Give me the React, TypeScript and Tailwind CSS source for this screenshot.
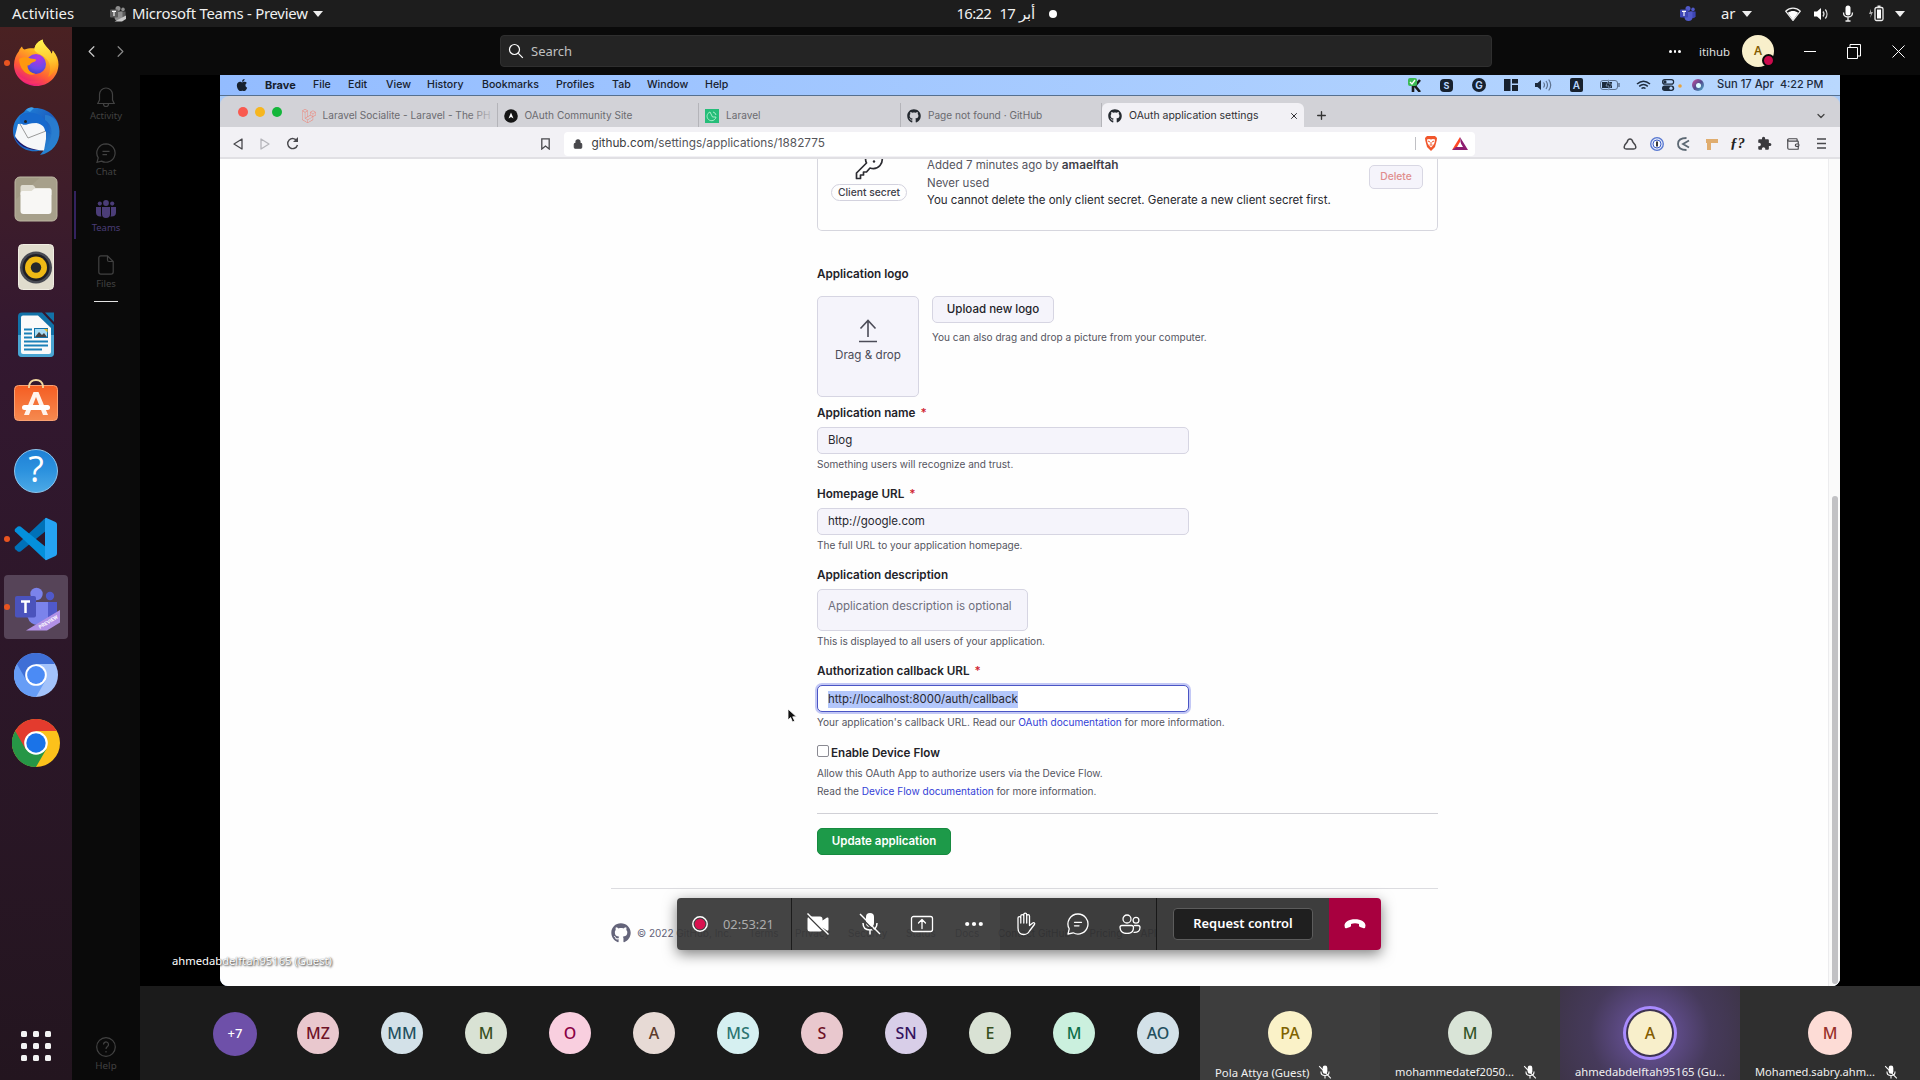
import type { ReactNode } from "react";
import { ChevronDown, ChevronLeft, ChevronRight, Lock, Plus, Wallet, X } from "lucide-react";
import { FaApple, FaGithub, FaLaravel } from "react-icons/fa";
import { MdExtension } from "react-icons/md";

const noto = "font-['Noto_Sans','Open_Sans',sans-serif]";
const inter = "font-['Inter','Liberation_Sans',sans-serif]";

/* ---------- Ubuntu top bar ---------- */

function Caret() {
  return <svg width="10" height="6" viewBox="0 0 10 6" fill="#eee"><path d="M0 0h10L5 6z" /></svg>;
}

function TeamsTray({ gray = false }: { gray?: boolean }) {
  const dark = gray ? "#5c5c5c" : "#3d45b5";
  const mid = gray ? "#8e8e8e" : "#5059c9";
  return (
    <svg width="16" height="16" viewBox="0 0 16 16">
      <circle cx="8" cy="2.6" r="2.5" fill={mid} />
      <circle cx="13" cy="3.4" r="1.8" fill={mid} />
      <path d="M10 5.5h5.6v4.8a3 3 0 0 1-5.600 0z" fill={dark} />
      <path d="M4.500 5.500h8v5.500a4 4 0 0 1-8 0z" fill={mid} />
      <rect x="0" y="3.500" width="8" height="8" rx="1" fill={dark} />
      <path d="M2 5.400h4M4 5.400v4.600" stroke="#fff" strokeWidth="1.100" />
      {gray && <path d="M4.500 15.500 16 9.500v3.500l-4 2.500z" fill="#c8c8c8" />}
    </svg>
  );
}

function TopBar() {
  return (
    <header className={`flex h-[27px] shrink-0 items-center bg-[#1d1d1d] text-[14.9px] leading-none text-[#f0f0f0] ${noto}`}>
      <span className="ml-3 w-[98px] shrink-0">Activities</span>
      <TeamsTray gray />
      <span className="ml-[6px] w-[181px] shrink-0 tracking-[-0.24px]">Microsoft Teams - Preview</span>
      <Caret />
      <div className="ml-[633.500px] flex w-[107px] shrink-0 items-center">
        <span className="w-[43px] tracking-[-0.7px]">16:22</span>
        <span className="w-[19px] tracking-[-0.7px]">17</span>
        <span className="w-[30px] text-[15px]" dir="rtl" lang="ar"><span className="float-left">أبر</span></span>
        <span className="h-2 w-2 rounded-full bg-white" />
      </div>
      <div className="mr-[15px] ml-auto flex items-center">
        <TeamsTray />
        <span className="ml-[25px] w-[21px]">ar</span>
        <Caret />
        <svg className="ml-[33px]" width="16" height="14" viewBox="0 0 16 14">
          <path d="M.7 4.200C5 0 11 0 15.300 4.200L8 13.500z" fill="none" stroke="#eee" strokeWidth="1.200" />
          <path d="M2.800 5.800C6 3.500 10 3.500 13.200 5.800L8 13z" fill="#fff" />
        </svg>
        <svg className="ml-3" width="16" height="14" viewBox="0 0 16 14">
          <path d="M1 4.500h3L8 1v12L4 9.500H1z" fill="#fff" />
          <path d="M10 4.500a4 4 0 0 1 0 5M12.300 2.500a7 7 0 0 1 0 9" fill="none" stroke="#ddd" strokeWidth="1.300" />
        </svg>
        <svg className="ml-[13px]" width="12" height="17" viewBox="0 0 12 17">
          <rect x="3.500" y="0.500" width="5" height="10" rx="2.500" fill="#fff" />
          <path d="M1.500 7.500c0 6 9 6 9 0M6 12v4M3.500 16h5" fill="none" stroke="#eee" strokeWidth="1.300" />
        </svg>
        <svg className="ml-[14px]" width="17" height="17" viewBox="0 0 17 17">
          <path d="M3 4 1 9h2l-1 4 3-6H3z" fill="#aaa" />
          <rect x="7" y="2.500" width="8" height="13" rx="1.500" fill="none" stroke="#eee" strokeWidth="1.300" />
          <rect x="9.500" y="0.500" width="3" height="2" fill="#eee" />
          <rect x="9" y="4.500" width="4" height="9" fill="#fff" />
        </svg>
        <span className="ml-[10px]"><Caret /></span>
      </div>
    </header>
  );
}

/* ---------- Dock ---------- */

function Firefox() {
  return (
    <svg width="48" height="48" viewBox="0 0 48 48">
      <defs>
        <linearGradient id="ffBody" x1="0.800" y1="0" x2="0.300" y2="1">
          <stop offset="0" stopColor="#fff14a" /><stop offset="0.350" stopColor="#ffb31f" />
          <stop offset="0.700" stopColor="#ff5b36" /><stop offset="1" stopColor="#e5128a" />
        </linearGradient>
        <linearGradient id="ffTail" x1="0.400" y1="0" x2="0.500" y2="1">
          <stop offset="0" stopColor="#fff44f" /><stop offset="0.600" stopColor="#ffc52e" /><stop offset="1" stopColor="#ff8a16" />
        </linearGradient>
        <radialGradient id="ffGlobe" cx="0.600" cy="0.200" r="0.900">
          <stop offset="0" stopColor="#b833e1" /><stop offset="0.600" stopColor="#6a4be8" /><stop offset="1" stopColor="#3a3fc4" />
        </radialGradient>
      </defs>
      <path d="M7 12c.5-2 2-3.500 3-4.500.5 1.500 1 2.500 2.500 3 3-1 7-1.500 10-1C23 5 27 2 30.500.5c.5 4 3 6 5 8.500 2 2 3.500 4 4 6 .8-1 1.200-2.200 1.300-3.500C45 16 46.500 21 46.500 25.500 46 38 36.500 47 24.500 47S2 37.500 2 26c0-5.500 2-10.500 5-14z" fill="url(#ffBody)" />
      <path d="M30.500.5c.5 4 3 6 5 8.500 2 2 3.500 4 4 6 .8-1 1.200-2.200 1.300-3.500C48 22 44 34 36 38c3-7 3-13-1-17.500C31 15 21 14 22.500 9.500 23 5 27 2 30.500.5z" fill="url(#ffTail)" />
      <circle cx="24" cy="25" r="10" fill="url(#ffGlobe)" />
      <path d="M7 20c3-2 7-2.500 10-1 2 1 5 .8 7 1.500.5 2-3 2.500-4.500 3.500-1.500 1-1.500 2.500-4 2.500 0 4 3 7.500 8 8.500-8 3-16-4-16.500-15z" fill="#ff980e" />
      <path d="M3 31c5 10 17 14 30 9-7 8-26 7-30-9z" fill="#ff3a5f" opacity=".55" />
    </svg>
  );
}

function Thunderbird() {
  return (
    <svg width="48" height="48" viewBox="0 0 48 48">
      <defs>
        <linearGradient id="tb" x1="0" y1="0" x2="1" y2="1"><stop offset="0" stopColor="#1f8be0" /><stop offset=".5" stopColor="#1d5fc0" /><stop offset="1" stopColor="#2b95dc" /></linearGradient>
      </defs>
      <path d="M12 5C14 1 18 0 21 1c14-1 26 9 26.500 23C48 36 40 46 28 48l4-5-6 1C12 46 1 36 1 24 1 16 5 9 12 5z" fill="url(#tb)" />
      <path d="M3 31c4 8 12 11 20 12l8-1z" fill="#1c1668" />
      <path d="m6 17 28-1.500V32l-2 11.500C21 43 9 40 3 29z" fill="#f6f7f9" />
      <path d="m8 17 8 14 18-7" fill="none" stroke="#9a9a9a" strokeWidth="1" />
      <path d="M9 8c7-5 19-2 24 5 4 5 3 10 6 14l-6-3c0-5-6-9-13-8-5 1-7 3-10 1C7 14 7 10 9 8z" fill="#1769cd" />
      <path d="M33 13c7 5 8 12 5 20-1 5-4 8-6 10 10-3 15-10 15-19S41 8 33 8z" fill="#2a7fd0" opacity=".85" />
      <path d="M14 3q4-4 8-2l-4 4z" fill="#3fa0ea" />
      <circle cx="13.500" cy="14.500" r="1.500" fill="#222" />
    </svg>
  );
}

function FilesIcon() {
  return (
    <svg width="44" height="46" viewBox="0 0 44 46">
      <rect x="1" y="1" width="42" height="44" rx="5" fill="#a19a84" stroke="#beb8a4" />
      <path d="M1.500 44V24L26 1.500h13q4 0 4 4V41q0 4-4 4H5z" fill="#b6b09c" opacity=".3" />
      <path d="M6.500 11q0-2 2-2h10q1.500 0 3 3h14q2 0 2 2v5h-31z" fill="#dfdcd0" />
      <path d="M6.500 17q0-2 2-2h9l3-2.500h15q2 0 2 2V35q0 3-3 3h-25q-3 0-3-3z" fill="#f8f7f5" />
    </svg>
  );
}

function Rhythmbox() {
  return (
    <svg width="48" height="48" viewBox="0 0 48 48">
      <rect x="6.500" y="1.500" width="35" height="45" rx="4" fill="#e0dccd" stroke="#f0ede2" />
      <circle cx="24" cy="24.500" r="16" fill="#484a52" />
      <circle cx="24" cy="24.500" r="13.500" fill="#1f1f26" />
      <circle cx="24" cy="24.500" r="11" fill="#efb915" />
      <circle cx="24" cy="24.500" r="5.200" fill="#26282b" />
    </svg>
  );
}

function Writer() {
  return (
    <svg width="48" height="48" viewBox="0 0 48 48">
      <path d="M10 1.500h20L42 14v28q0 4-4 4H10q-4 0-4-4V5.500q0-4 4-4z" fill="#1272a8" />
      <path d="M6 24h36v18q0 4-4 4H10q-4 0-4-4z" fill="#4aa5d2" />
      <path d="M11 4.500h15L39 17v24q0 2-2 2H11q-2 0-2-2V6.500q0-2 2-2z" fill="#fafafa" />
      <path d="M33 1.500h9V11z" fill="#1272a8" />
      <path d="M12 18.500h8M12 22.500h8M12 26.500h8M12 30.500h24M12 34.500h24M12 38.500h18" stroke="#1b80b8" strokeWidth="2" />
      <rect x="22.500" y="17.500" width="13" height="9" fill="#a7dcf4" stroke="#1272a8" />
      <path d="m23 26 4-5 3 3 2-2 3 4z" fill="#444" /><path d="M32 18h3.500v3.500z" fill="#f2bd1d" />
    </svg>
  );
}

function Software() {
  return (
    <svg width="48" height="48" viewBox="0 0 48 48">
      <defs><linearGradient id="sw" x1="0" y1="0" x2="0" y2="1"><stop offset="0" stopColor="#f55d22" /><stop offset="1" stopColor="#f58a50" /></linearGradient></defs>
      <rect x="2.500" y="6.500" width="43" height="35" rx="4" fill="url(#sw)" stroke="#f9a173" />
      <path d="M17 9V7q1-6 7-6t7 6v2" fill="none" stroke="#f3d9a0" strokeWidth="1.800" />
      <path d="m12 36 9.500-23h5L36 36h-5l-7-18-7 18z" fill="#fff3ec" />
      <rect x="10" y="26" width="28" height="5" rx="2.500" fill="#fff" />
    </svg>
  );
}

function HelpIcon() {
  return (
    <div className="flex h-11 w-11 items-center justify-center rounded-full border border-[#8cc7f0] bg-linear-to-b from-[#1f80d6] via-[#2c92de] to-[#4ba9e6] pb-1 font-['Open_Sans',sans-serif] text-[36px] leading-none text-white">
      ?
    </div>
  );
}

function VsCode() {
  return (
    <svg width="44" height="44" viewBox="0 0 44 44">
      <path d="M1 29.500q-1 1.500.3 2.700l2.500 2.200q1.400.9 2.700 0L33 13V1q-1.500 0-3 1.300z" fill="#0071b8" />
      <path d="M1 14.500q-1-1.500.3-2.700l2.500-2.200q1.400-.9 2.700 0L33 31v12q-1.500 0-3-1.300z" fill="#0490dc" />
      <path d="M32 .8 41.500 5q1.500.8 1.500 2.500v29q0 1.700-1.500 2.500L32 43.200q-1 .2-1-2V2.800q0-2 1-2z" fill="#25a3f3" />
    </svg>
  );
}

function TeamsDock() {
  return (
    <svg width="48" height="48" viewBox="0 0 48 48">
      <circle cx="24.500" cy="11" r="6.200" fill="#7b83eb" /><circle cx="38" cy="13" r="4.200" fill="#5059c9" />
      <path d="M35 19h10v15h-10z" fill="#5059c9" />
      <path d="M17 19h19v16q-2 7-10 7T15.500 34z" fill="#7b83eb" />
      <rect x="3" y="13" width="21" height="21.500" rx="2" fill="#4b53bc" />
      <path d="M9 18.500h9M13.500 18.500V30" stroke="#fff" strokeWidth="2.500" />
      <path d="M14 47.500 48 27v12.500l-13 8z" fill="#b191e6" />
      <text x="28" y="46" transform="rotate(-31 28 46)" fill="#fff" className="font-[Roboto] text-[5px] font-bold">PREVIEW</text>
    </svg>
  );
}

function ChromeIcon({ size, top, left, right, core }: { size: number; top: string; left: string; right: string; core: string }) {
  return (
    <svg width={size} height={size} viewBox="0 0 48 48">
      <circle cx="24" cy="24" r="24" fill={right} />
      <path d="M24 24 3.200 12A24 24 0 0 0 24 48l10.400-18z" fill={left} />
      <path d="M24 12h20.800A24 24 0 0 0 3.200 12l10.400 18z" fill={top} />
      <circle cx="24" cy="24" r="11.800" fill="#fff" />
      <circle cx="24" cy="24" r="9.700" fill={core} />
    </svg>
  );
}

function DockItem({ children, running = false, active = false }: { children: ReactNode; running?: boolean; active?: boolean }) {
  return (
    <div className={`relative flex h-16 w-16 shrink-0 items-center justify-center rounded-[4px] ${active ? "bg-[#564458]" : ""}`}>
      {running && <span className="absolute top-[29px] left-0 h-[6px] w-[6px] rounded-full bg-[#e95420]" />}
      {children}
    </div>
  );
}

function Dock() {
  return (
    <aside className="flex w-[72px] shrink-0 flex-col items-center gap-1 bg-linear-to-b from-[#4a2122] via-[#331830] via-30% to-[#23151f] pt-1">
      <DockItem running><Firefox /></DockItem>
      <DockItem><Thunderbird /></DockItem>
      <DockItem><FilesIcon /></DockItem>
      <DockItem><Rhythmbox /></DockItem>
      <DockItem><Writer /></DockItem>
      <DockItem><Software /></DockItem>
      <DockItem><HelpIcon /></DockItem>
      <DockItem running><VsCode /></DockItem>
      <DockItem running active><TeamsDock /></DockItem>
      <DockItem><ChromeIcon size={44} top="#3f6fd6" left="#669df6" right="#a3c3fb" core="#4b8bf5" /></DockItem>
      <DockItem><ChromeIcon size={48} top="#e33b2e" left="#269646" right="#fcc11b" core="#1a73e8" /></DockItem>
      <div className="mt-auto mb-[19px] grid grid-cols-3 gap-[6px]">
        {Array.from({ length: 9 }, (_, i) => <span key={i} className="h-[6px] w-[6px] rounded-[1.500px] bg-[#f3f3f3]" />)}
      </div>
    </aside>
  );
}

/* ---------- Teams chrome ---------- */

function TeamsHeader() {
  return (
    <div className={`flex h-12 shrink-0 items-center bg-[#0a0a0a] ${noto}`}>
      <ChevronLeft className="ml-[10px] text-[#c8c8c8]" size={19} strokeWidth={1.500} />
      <ChevronRight className="ml-[10px] text-[#8a8a8a]" size={19} strokeWidth={1.500} />
      <div className="ml-[370px] flex h-8 w-[992px] shrink-0 items-center rounded-[4px] border border-[#2f2f2f] bg-[#242424] text-[13px] text-[#c0c0c0]">
        <svg className="ml-[7px]" width="16" height="16" viewBox="0 0 16 16" fill="none" stroke="#fff" strokeWidth="1.200"><circle cx="6.500" cy="6.500" r="5" /><path d="m10.300 10.300 4.500 4.500" /></svg>
        <span className="mt-px ml-[7px]">Search</span>
      </div>
      <div className="ml-[177px] flex w-3 gap-[2px]">
        <i className="h-[3px] w-[3px] rounded-full bg-white" /><i className="h-[3px] w-[3px] rounded-full bg-white" /><i className="h-[3px] w-[3px] rounded-full bg-white" />
      </div>
      <span className="mt-px ml-[18px] w-[43px] text-[11.400px] text-[#e0e0e0]">itihub</span>
      <div className="relative flex h-8 w-8 shrink-0 items-center justify-center rounded-full bg-[#f8efcb] text-[12px] font-semibold text-[#835c00]">
        A
        <span className="absolute right-[-1px] bottom-0 h-[13px] w-[13px] rounded-full border-2 border-[#0a0a0a] bg-[#cc0a4c]" />
      </div>
      <span className="ml-[30px] h-px w-3 bg-white" />
      <svg className="ml-[31px]" width="14" height="15" viewBox="0 0 14 15" fill="none" stroke="#fff"><path d="M.5 3.500h10v11H.500zM3 3V.5h10.500V12H11" /></svg>
      <svg className="ml-[31px]" width="13" height="13" viewBox="0 0 13 13" stroke="#fff"><path d="m.5.500 12 12M12.500.500l-12 12" /></svg>
    </div>
  );
}

function RailItem({ icon, label, active = false }: { icon: ReactNode; label: string; active?: boolean }) {
  return (
    <div className={`flex h-14 w-full flex-col items-center pt-[9px] ${active ? "text-[#4b3d78]" : "text-[#424242]"}`}>
      <div className="flex h-[24px] items-center">{icon}</div>
      <span className="text-[9.500px] leading-[14px]">{label}</span>
    </div>
  );
}

function Rail() {
  return (
    <nav className={`relative flex w-[68px] shrink-0 flex-col items-center bg-[#0a0a0a] pt-px ${noto}`}>
      <span className="absolute top-[116px] left-[2px] h-12 w-[2px] bg-[#34225f]" />
      <RailItem label="Activity" icon={<svg width="20" height="22" viewBox="0 0 20 22" fill="none" stroke="currentColor" strokeWidth="1.200"><path d="M3.500 14V8.500a6.500 6.500 0 0 1 13 0V14l1.700 3.500H1.800zM7.500 18a2.500 2.500 0 0 0 5 0" /></svg>} />
      <RailItem label="Chat" icon={<svg width="20" height="20" viewBox="0 0 20 20" fill="none" stroke="currentColor" strokeWidth="1.200"><path d="M10 .800A9.200 9.200 0 1 1 5.500 18.100L1 19.300l1.200-4.500A9.200 9.200 0 0 1 10 .800zM6.500 8.300h7M6.500 11.700h4.500" /></svg>} />
      <RailItem active label="Teams" icon={<svg width="20" height="18" viewBox="0 0 20 18" fill="currentColor"><circle cx="10" cy="3" r="2.900" /><circle cx="3.800" cy="3.600" r="2.100" /><circle cx="16.200" cy="3.600" r="2.100" /><path d="M6 7h8v7a4 4 0 0 1-8 0zM0 7h5v7.500q0 1 .5 2Q0 17 0 12.500zM20 7h-5v7.500q0 1-.5 2Q20 17 20 12.500z" /></svg>} />
      <RailItem label="Files" icon={<svg width="16" height="20" viewBox="0 0 16 20" fill="none" stroke="currentColor" strokeWidth="1.200"><path d="M9.500.800H3Q.8.800.8 3v14q0 2.200 2.200 2.200h10q2.200 0 2.200-2.200V6.500zM9.500.800V5q0 1.500 1.500 1.500h4.200" /></svg>} />
      <span className="mt-[1px] h-px w-6 bg-[#e4e4e4]" />
      <div className="mt-auto flex flex-col items-center pb-[7px] text-[#424242]">
        <svg width="20" height="20" viewBox="0 0 20 20" fill="none" stroke="currentColor" strokeWidth="1.200"><circle cx="10" cy="10" r="9.300" /><path d="M7.500 7.500a2.500 2.500 0 1 1 4 2Q10 10.500 10 12M10 14v1.500" /></svg>
        <span className="mt-[2px] text-[9.800px] leading-[14px]">Help</span>
      </div>
    </nav>
  );
}

/* ---------- Shared Mac screen ---------- */

function MacIcons() {
  return (
    <div className="flex items-center text-[#1d2b3d]">
      <svg width="14" height="14" viewBox="0 0 14 14"><path d="M5 4v10M6 9l6-7M7 8l5 6" stroke="#1a1a1a" strokeWidth="2.600" /><rect x="0" y="0" width="9" height="8" rx="2" fill="#3cba54" /><path d="m2 4 2 2 3-4" stroke="#fff" strokeWidth="1.300" fill="none" /></svg>
      <span className="ml-[18px] flex h-[13px] w-[13px] items-center justify-center rounded-[4px] bg-[#17212e] text-[9px] font-bold text-[#b7d5fc]">S</span>
      <span className="ml-[19px] flex h-[14px] w-[14px] items-center justify-center rounded-full bg-[#17212e] text-[10px] font-bold text-[#b7d5fc]">G</span>
      <svg className="ml-[18px]" width="14" height="12" viewBox="0 0 14 12" fill="#17212e"><path d="M0 0h6.500v12H0zM8 0h6v4.500H8zM8 6h6v6H8z" /></svg>
      <svg className="ml-[17px]" width="18" height="14" viewBox="0 0 18 14"><path d="M0 5h2.500L6 2v10L2.500 9H0z" fill="currentColor" /><path d="M8.500 4.500q2 2.500 0 5M11 3q3 4 0 8M13.700 1.500q4 5.500 0 11" fill="none" stroke="#5d7290" strokeWidth="1.200" /></svg>
      <span className="ml-[17px] flex h-[14px] w-[13px] items-center justify-center rounded-[2px] bg-[#17212e] text-[10px] font-semibold text-[#b7d5fc]">A</span>
      <svg className="ml-[17px]" width="21" height="12" viewBox="0 0 21 12"><rect x=".5" y="1.500" width="17" height="9" rx="2.500" fill="none" stroke="#5d7290" /><path d="M2 3h10v6H2z" fill="currentColor" /><path d="m9 0-3 7h3l-1 5 4-7H9z" fill="#17212e" stroke="#b7d5fc" strokeWidth=".5" /><path d="M19 4v4" stroke="#5d7290" strokeWidth="1.500" /></svg>
      <svg className="ml-[15px]" width="15" height="11" viewBox="0 0 15 11" fill="none" stroke="currentColor" strokeWidth="1.500"><path d="M1 4q6.500-5.500 13 0M3.200 6.300q4.300-3.600 8.600 0M5.500 8.500q2-1.500 4 0" /></svg>
      <svg className="ml-[11px]" width="20" height="12" viewBox="0 0 20 12"><rect x=".6" y=".6" width="11" height="4.500" rx="2.200" fill="none" stroke="currentColor" strokeWidth="1.200" /><rect x="0" y="6.500" width="12.200" height="5.500" rx="2.700" fill="currentColor" /><circle cx="3" cy="2.900" r="1.600" fill="currentColor" /><circle cx="9" cy="9.200" r="1.600" fill="#b7d5fc" /><circle cx="18" cy="7" r="1.800" fill="#e8a33d" /></svg>
      <span className="ml-[10px] flex h-3 w-3 items-center justify-center rounded-full bg-linear-to-br from-[#d0459c] via-[#524a8e] to-[#39b3c8]"><i className="h-[5px] w-[5px] rounded-full bg-[#dff]" /></span>
      <span className="ml-[13px] w-[63px] text-[11.200px]">Sun 17 Apr</span>
      <span className="w-[60px] text-[10.800px]">4:22 PM</span>
    </div>
  );
}

function MacMenuBar() {
  return (
    <div className="flex h-[21px] shrink-0 items-center border-b border-[#56708f] bg-linear-to-r from-[#93bcff] to-[#b9d8fe] text-[10.600px] leading-none font-medium whitespace-nowrap text-[#17212e]">
      <FaApple className="ml-[15px]" size={14} />
      <span className="ml-[16px] w-12 text-[11px] font-bold">Brave</span>
      <span className="w-[35px]">File</span>
      <span className="w-[38px]">Edit</span>
      <span className="w-[41px]">View</span>
      <span className="w-[55px]">History</span>
      <span className="w-[74px]">Bookmarks</span>
      <span className="w-[56px]">Profiles</span>
      <span className="w-[35px]">Tab</span>
      <span className="w-[58px]">Window</span>
      <span>Help</span>
      <div className="ml-auto"><MacIcons /></div>
    </div>
  );
}

function Tab({ icon, title, width }: { icon: ReactNode; title: string; width: string }) {
  return (
    <div className={`mt-[7px] flex h-6 shrink-0 items-center overflow-hidden border-r border-[#b4b4b9] pt-[2px] pl-[6px] text-[10.100px] whitespace-nowrap text-[#6b6b70] ${width}`}>
      <span className="mr-[7px] flex w-[14px] shrink-0 justify-center">{icon}</span>
      {title}
    </div>
  );
}

function TabStrip() {
  return (
    <div className="flex h-[31px] shrink-0 rounded-t-[9px] bg-[#d2d2d7]">
      <div className="mt-[11px] ml-[18px] flex w-[57.500px] gap-[7px]">
        <i className="h-[10px] w-[10px] rounded-full bg-[#f95a50]" /><i className="h-[10px] w-[10px] rounded-full bg-[#f6b61f]" /><i className="h-[10px] w-[10px] rounded-full bg-[#14b63b]" />
      </div>
      <div className="relative">
        <Tab width="w-[202px]" title="Laravel Socialite - Laravel - The PH" icon={<FaLaravel size={14} className="text-[#ee8377]" />} />
        <span className="absolute top-2 right-[1px] h-5 w-7 bg-linear-to-r from-transparent to-[#d2d2d7]" />
      </div>
      <Tab width="w-[201.500px]" title="OAuth Community Site" icon={<svg width="14" height="14" viewBox="0 0 14 14"><circle cx="7" cy="7" r="6.800" fill="#151515" /><path d="m4.500 9.500 2.500-6 2.500 6L7 8z" fill="#fff" /></svg>} />
      <Tab width="w-[202px]" title="Laravel" icon={<svg width="14" height="14" viewBox="0 0 14 14"><path d="M0 0h14v14H0z" fill="#25bd79" /><path d="M5 3a4.500 4.500 0 1 0 6 5H7.500L5 3zM8 3a4 4 0 0 1 3 3" fill="none" stroke="#a5efc8" /></svg>} />
      <Tab width="w-[201px]" title="Page not found · GitHub" icon={<FaGithub size={14} className="text-[#24292f]" />} />
      <div className="mt-[7px] flex h-6 w-[202px] shrink-0 items-center rounded-t-[6px] bg-[#f2f1f5] pt-[2px] pl-[6px] text-[10.460px] whitespace-nowrap text-[#303034]">
        <FaGithub size={14} className="mr-[7px] shrink-0 text-[#24292f]" />
        <span className="w-[160px]">OAuth application settings</span>
        <X size={10} strokeWidth={2.400} />
      </div>
      <Plus className="mt-[13px] ml-[11px] text-[#333]" size={13} strokeWidth={2.500} />
      <ChevronDown className="mt-[14px] mr-[13px] ml-auto text-[#444]" size={12} strokeWidth={2.500} />
    </div>
  );
}

function Toolbar() {
  return (
    <div className="flex h-8 shrink-0 items-center border-b-2 border-[#e1e0e4] bg-[#f2f1f5] pt-[3px] text-[#48484c]">
      <svg className="ml-[13px]" width="10" height="12" viewBox="0 0 10 12" fill="none" stroke="currentColor" strokeWidth="1.300" strokeLinejoin="round"><path d="M9 1v10L1 6z" /></svg>
      <svg className="ml-[17px]" width="10" height="12" viewBox="0 0 10 12" fill="none" stroke="#b5b5ba" strokeWidth="1.300" strokeLinejoin="round"><path d="M1 1v10l8-5z" /></svg>
      <svg className="ml-[16px]" width="13" height="13" viewBox="0 0 13 13"><path d="M11 4a5 5 0 1 0 .5 4" fill="none" stroke="currentColor" strokeWidth="1.400" /><path d="M12 0v5H7z" fill="currentColor" /></svg>
      <svg className="ml-[241.500px]" width="9" height="12" viewBox="0 0 9 12" fill="none" stroke="currentColor" strokeWidth="1.300"><path d="M.8.800h7.400v10.200L4.500 8 .8 11z" /></svg>
      <div className="ml-[14px] flex h-6 w-[911px] shrink-0 items-center rounded-[4px] bg-white">
        <Lock className="ml-[9px]" size={10} strokeWidth={2.500} fill="currentColor" />
        <span className="ml-[9px] w-[823px] text-[11.790px] text-[#55555a]"><span className="text-[#3c3c40]">github.com</span>/settings/applications/1882775</span>
        <span className="mr-2 h-[13px] w-px bg-[#c0c0c4]" />
        <svg width="14" height="15" viewBox="0 0 14 15"><path d="m3 0-2 2 .3 2.500L3 11l4 4 4-4 1.700-6.500L13 2l-2-2z" fill="#f1562b" /><path d="M3 3.500 5 3l2 .5L9 3l2 .5-.5 3.500L9 9.500l-2 2-2-2L3.500 7z" fill="#fff" /><path d="m4 5 2 1M10 5 8 6M7 6v2.500M5.500 9h3" stroke="#f1562b" strokeWidth="1" fill="none" /></svg>
        <svg className="ml-[14px]" width="16" height="13" viewBox="0 0 16 13"><path d="M8 0 0 13l8-4z" fill="#ff4724" /><path d="m8 0 8 13H0l4-3h5z" fill="#8e1e70" /><path d="m8 5-3 5h6z" fill="#fff" /></svg>
      </div>
      <div className="mr-[14px] ml-auto flex items-center">
        <svg width="14" height="12" viewBox="0 0 14 12" fill="none" stroke="currentColor" strokeWidth="1.500"><path d="M4.200 4Q4.800 1 7 1t2.800 3l2.400 3Q14 11 10.500 11h-7Q0 11 1.800 7z" /></svg>
        <svg className="ml-[13px]" width="14" height="14" viewBox="0 0 14 14"><circle cx="7" cy="7" r="6.300" fill="#dfe5f7" stroke="#5878d0" strokeWidth="1.300" /><circle cx="7" cy="7" r="4" fill="#fff" stroke="#3c5fc7" /><path d="M7 4.500v5" stroke="#222" strokeWidth="1.800" /></svg>
        <svg className="ml-[13px]" width="13" height="14" viewBox="0 0 13 14" fill="none" stroke="#5c6873" strokeWidth="1.800"><path d="M9.500 1Q1 1 1 7t8.500 6M12 3.500 6 7l6 3.500" /></svg>
        <svg className="ml-[16px]" width="12" height="14" viewBox="0 0 12 14"><path d="M0 2h12v4H5v7H1V6H0z" fill="#e0ad6f" /></svg>
        <span className="ml-[12px] w-[17px] font-['Liberation_Serif',serif] text-[15px] leading-none font-bold text-[#222] italic">ƒ?</span>
        <MdExtension className="ml-[10px] text-[#3a3a3e]" size={15} />
        <Wallet className="ml-[14px]" size={14} />
        <svg className="ml-[17px]" width="9" height="11" viewBox="0 0 9 11" stroke="currentColor" strokeWidth="1.400"><path d="M0 1h9M0 5.500h9M0 10h9" /></svg>
      </div>
    </div>
  );
}

function FieldLabel({ children, required = false, gap = "mt-3" }: { children: ReactNode; required?: boolean; gap?: string }) {
  return (
    <div className={`${gap} h-[18px] text-[11.680px] leading-[19px] font-semibold text-[#232329]`}>
      {children}{required && <span className="ml-[5px] text-[#cf222e]">*</span>}
    </div>
  );
}

function Help({ children }: { children: ReactNode }) {
  return <div className="mt-[2px] h-[17px] text-[10.070px] leading-4 whitespace-nowrap text-[#55555f]">{children}</div>;
}

function Field({ value }: { value: string }) {
  return <div className="mt-[5px] flex h-[27px] w-[372px] items-center rounded-[5px] border border-[#d6d5e2] bg-[#f5f4fb] pl-[10px] text-[11.500px] text-[#28282e]">{value}</div>;
}

function SettingsPage() {
  return (
    <div className="relative flex min-h-0 grow justify-between overflow-hidden rounded-b-[8px] bg-[#fefefe]">
      <div className="ml-[391px] flex w-[827px] shrink-0 flex-col">
        <div className="ml-[206px] flex w-[621px] flex-col text-[11.490px] text-[#28282e]">
          <div className="flex h-[72px] shrink-0 rounded-b-[5px] border border-t-0 border-[#d6d6de]">
            <div className="ml-[13px] flex w-[76px] flex-col items-center">
              <svg width="30" height="22" viewBox="0 0 30 22" fill="none" stroke="#2c2c32" strokeWidth="1.700" strokeLinejoin="round"><path d="M12 -2q-1 3 .5 6L2.500 14v5.500h4V16h3v-3h3l3.500-4q6 2 10-2.500Q29 3 28 -2" /><circle cx="20" cy="2.500" r="1.200" fill="#2c2c32" stroke="none" /></svg>
              <span className="mt-[3px] flex h-[17px] w-[76px] items-center justify-center rounded-full border border-[#d3d2de] text-[10.300px] font-medium text-[#3f3f49]">Client secret</span>
            </div>
            <div className="mt-[-2px] ml-[20px] leading-[17.700px] whitespace-nowrap">
              <div className="text-[#55555f]">Added 7 minutes ago by <b className="text-[11.800px] font-semibold text-[#3f3f49]">amaelftah</b></div>
              <div className="text-[#55555f]">Never used</div>
              <div>You cannot delete the only client secret. Generate a new client secret first.</div>
            </div>
            <div className="mt-[6px] mr-[14px] ml-auto flex h-6 w-[54px] items-center justify-center rounded-[5px] border border-[#d8d7e3] bg-[#f5f4fb] text-[10.300px] font-medium text-[#e08e8e]">Delete</div>
          </div>
          <FieldLabel gap="mt-[34px]">Application logo</FieldLabel>
          <div className="mt-[13px] flex h-[101px] shrink-0">
            <div className="flex w-[102px] flex-col items-center rounded-[5px] border border-[#d6d5e2] bg-[#f5f4fb] pt-[22px] text-[11.650px] leading-[18px] text-[#4c4c58]">
              <svg width="18" height="24" viewBox="0 0 18 24" fill="none" stroke="currentColor" strokeWidth="1.600"><path d="M9 18V2M1.500 9.500 9 1.500l7.500 8M0 22.500h18" /></svg>
              <span className="mt-[3px]">Drag &amp; drop</span>
            </div>
            <div className="ml-[13px]">
              <div className="flex h-[27px] w-[122px] items-center justify-center rounded-[5px] border border-[#d6d5e2] bg-[#f5f4fb] pt-px text-[11.530px] font-medium text-[#232329]">Upload new logo</div>
              <div className="mt-[6px] text-[10.070px] leading-4 text-[#55555f]">You can also drag and drop a picture from your computer.</div>
            </div>
          </div>
          <FieldLabel gap="mt-[7px]" required>Application name</FieldLabel>
          <Field value="Blog" />
          <Help>Something users will recognize and trust.</Help>
          <FieldLabel required>Homepage URL</FieldLabel>
          <Field value="http://google.com" />
          <Help>The full URL to your application homepage.</Help>
          <FieldLabel>Application description</FieldLabel>
          <div className="mt-[5px] h-[42px] w-[211px] rounded-[5px] border border-[#d6d5e2] bg-[#f5f4fb] pt-[8px] pl-[10px] leading-[17px] text-[#6e6e7c]">Application description is optional</div>
          <Help>This is displayed to all users of your application.</Help>
          <FieldLabel required>Authorization callback URL</FieldLabel>
          <div className="mt-[5px] flex h-[27px] w-[372px] items-center rounded-[5px] border border-[#4a55c4] bg-white pt-px pl-[10px] text-[11.420px] text-[#28282e] shadow-[0_0_0_2px_#c3c8f5]">
            <span className="bg-[#b3c7fb] leading-[17px]">http://localhost:8000/auth/callback</span>
          </div>
          <Help>Your application's callback URL. Read our <a className="text-[#3442d6]">OAuth documentation</a> for more information.</Help>
          <div className="mt-3 flex h-[18px] items-center text-[11.630px] leading-[20px] font-semibold text-[#232329]">
            <span className="mr-[2px] mb-[2px] h-[12px] w-[12px] rounded-[2px] border border-[#8a8a92] bg-white" />
            <span className="mt-px">Enable Device Flow</span>
          </div>
          <div className="mt-[3px] text-[10.060px] leading-[18px] text-[#55555f]">
            <div>Allow this OAuth App to authorize users via the Device Flow.</div>
            <div>Read the <a className="text-[#3442d6]">Device Flow documentation</a> for more information.</div>
          </div>
          <div className="mt-[13px] h-px shrink-0 bg-[#d0d0d6]" />
          <div className="mt-[14px] flex h-[27px] w-[134px] items-center justify-center rounded-[5px] border border-[#178a40] bg-[#1d9a49] text-[11.490px] font-semibold text-white">Update application</div>
        </div>
        <div className="mt-[33px] h-px shrink-0 bg-[#dcdce0]" />
        <div className="flex h-[88px] items-center text-[10px] whitespace-nowrap text-[#64647a]">
          <FaGithub size={20} className="mr-[6px]" />
          <span className="w-[112px]">© 2022 GitHub, Inc.</span>
          <span className="w-[46px]">Terms</span>
          <span className="w-[53px]">Privacy</span>
          <span className="w-[58px]">Security</span>
          <span className="w-[49px]">Status</span>
          <span className="w-[43px]">Docs</span>
          <span className="w-[91.500px]">Contact GitHub</span>
          <span className="w-[51px]">Pricing</span>
          <span>API</span>
        </div>
      </div>
      <div className="flex w-3 shrink-0 items-end justify-center border-l border-[#ececee] bg-[#fafafa] pb-[2px]">
        <span className="h-[488px] w-[6px] rounded-full bg-[#c1c1c4]" />
      </div>
      <svg className="absolute top-[549px] left-[567px]" width="11" height="16" viewBox="0 0 11 16"><path d="M1 1v11l2.600-2.500L5.500 14l2.200-1-2-4.200H9.500z" fill="#111" stroke="#fff" strokeWidth=".8" /></svg>
    </div>
  );
}

/* ---------- Call controls ---------- */

function CallButton({ children }: { children: ReactNode }) {
  return <div className="flex w-[52px] items-center justify-center">{children}</div>;
}

function CallBar() {
  const line = { fill: "none", stroke: "#fff", strokeWidth: 1.3, strokeLinejoin: "round" as const, strokeLinecap: "round" as const };
  return (
    <div className={`absolute top-[823px] left-[537px] flex h-[52px] w-[704px] overflow-hidden rounded-[4px] shadow-[0_4px_14px_rgba(0,0,0,0.5)] ${noto}`}>
      <div className="flex w-[115px] items-center border-r border-[#1c1c1c] bg-[#363636]/93 pl-[15px]">
        <svg width="16" height="16" viewBox="0 0 16 16"><circle cx="8" cy="8" r="7.200" fill="none" stroke="#fff" strokeWidth="1.400" /><circle cx="8" cy="8" r="5.300" fill="#d8124f" /></svg>
        <span className="mt-px ml-[15px] text-[12.850px] text-[#adadad]">02:53:21</span>
      </div>
      <div className="flex w-[208px] bg-[#363636]/93">
        <CallButton><svg width="24" height="24" viewBox="0 0 24 24"><path d="M4 4.500h10q2.500 0 2.500 2.500v1.500L21 5.500q1.500-.5 1.500 1v11q0 1.500-1.500 1l-4.500-3V17q0 2.500-2.500 2.500H4Q1.500 19.500 1.500 17V7Q1.500 4.500 4 4.500z" fill="#fff" /><path d="m1 3 21 21" stroke="#404040" strokeWidth="1.500" /><path d="m1.500 1.500 21 21" stroke="#fff" strokeWidth="1.500" /></svg></CallButton>
        <CallButton><svg width="24" height="24" viewBox="0 0 24 24"><rect x="8" y="1" width="8" height="14" rx="4" fill="#fff" /><path d="M5 11q0 7 7 7t7-7M12 18v4.500" fill="none" stroke="#fff" strokeWidth="1.500" /><path d="m1.500 4 20 20" stroke="#404040" strokeWidth="1.500" /><path d="m2 2 20 20" stroke="#fff" strokeWidth="1.500" /></svg></CallButton>
        <CallButton><svg width="24" height="18" viewBox="0 0 24 18" {...line}><rect x="1.500" y="1.500" width="21" height="15" rx="2" /><path d="M12 13.500V5M8.500 8 12 4.500 15.500 8" /></svg></CallButton>
        <CallButton><svg width="18" height="6" viewBox="0 0 18 6" fill="#fff"><circle cx="2.200" cy="3" r="2.100" /><circle cx="9" cy="3" r="2.100" /><circle cx="15.800" cy="3" r="2.100" /></svg></CallButton>
      </div>
      <div className="flex w-[157px] border-r border-[#181818] bg-[#2e2e2e]/93">
        <CallButton><svg width="20" height="24" viewBox="0 0 20 24" {...line}><path d="M2 12V6q0-1.400 1.400-1.400T4.800 6v5V4q0-1.400 1.500-1.400T7.800 4v7-8.500Q7.800 1.100 9.200 1.100t1.500 1.400V11 4q0-1.300 1.400-1.300T13.500 4v9.500l3.200-2.500q1-.7 1.700 0t0 1.500L13.500 19Q11.500 22.500 8 22.500 2 22.500 2 16z" /></svg></CallButton>
        <CallButton><svg width="22" height="22" viewBox="0 0 22 22" {...line}><path d="M11 1a10 10 0 1 1-4.800 18.800L1 21l1.200-5.200A10 10 0 0 1 11 1zM7.500 9.300h7M7.500 12.800H12" /></svg></CallButton>
        <CallButton><svg width="22" height="20" viewBox="0 0 22 20" {...line}><circle cx="8" cy="5" r="4" /><circle cx="17" cy="6.200" r="2.900" /><path d="M3 11.500h9.500q2 0 2 2 0 6-6.500 6t-7-6q0-2 2-2zM15.500 11.500h3.500q2 0 2 2 0 5-6 4.800" /></svg></CallButton>
      </div>
      <div className="flex w-[172px] items-center justify-center bg-[#2e2e2e]/93">
        <div className="flex h-8 w-[140px] items-center justify-center rounded-[4px] border border-[#5c5c5c] bg-[#1f1f1f] text-[12.900px] font-semibold text-white">Request control</div>
      </div>
      <div className="flex w-[52px] items-center justify-center bg-[#a8003f]">
        <svg width="22" height="10" viewBox="0 0 22 10" fill="#fff"><path d="M11 .3C5 .3.500 3 .5 6.500q0 3.500 2.500 2.500l3-1q1-.4 1-1.500V5q4-1.300 8 0v1.500q0 1.100 1 1.500l3 1q2.500 1 2.500-2.500C21.500 3 17 .3 11 .3z" /></svg>
      </div>
    </div>
  );
}

/* ---------- Participants ---------- */

const guests = [
  { t: "MZ", c: "bg-[#e9c8ce] text-[#6e1226]" },
  { t: "MM", c: "bg-[#d3e1e8] text-[#234f5e]" },
  { t: "M", c: "bg-[#d9e2d4] text-[#37501f]" },
  { t: "O", c: "bg-[#f9cfdf] text-[#8b0045]" },
  { t: "A", c: "bg-[#e7dad5] text-[#5d3b2c]" },
  { t: "MS", c: "bg-[#d6f0f1] text-[#2c7571]" },
  { t: "S", c: "bg-[#e9c8ce] text-[#6e1226]" },
  { t: "SN", c: "bg-[#d8cee8] text-[#35135f]" },
  { t: "E", c: "bg-[#d9e2d4] text-[#37501f]" },
  { t: "M", c: "bg-[#cbf0de] text-[#0c6e48]" },
  { t: "AO", c: "bg-[#d3e1e8] text-[#234f5e]" },
];

const speakers = [
  { t: "PA", name: "Pola Attya (Guest)", muted: true, bg: "bg-[#3d3d3d]", c: "bg-[#faf2c8] text-[#7f6300]", ring: "", size: "text-[11.340px]" },
  { t: "M", name: "mohammedatef2050...", muted: true, bg: "bg-[#383838]", c: "bg-[#d9e4d7] text-[#325427]", ring: "", size: "text-[11.130px]" },
  { t: "A", name: "ahmedabdelftah95165 (Gu...", muted: false, bg: "bg-[radial-gradient(circle_at_50%_50%,#6a5299_0px,#5b4982_30px,#463a5b_60px,#3e3549_100px)]", c: "bg-[#f8efcb] text-[#835c00]", ring: "shadow-[0_0_0_2px_#3d3350,0_0_0_5px_#a98bff]", size: "text-[11.230px]" },
  { t: "M", name: "Mohamed.sabry.ahm...", muted: true, bg: "bg-[#2f2f2f]", c: "bg-[#fddcd6] text-[#963029]", ring: "", size: "text-[11.110px]" },
];

function Participants() {
  return (
    <div className={`flex h-[94px] shrink-0 bg-[#1b1b1b] ${noto}`}>
      <div className="flex w-[1060px] shrink-0 items-center pl-[73px] text-[16px] font-medium">
        <div className="mt-[2px] mr-10 flex h-11 w-11 items-center justify-center rounded-full bg-[#6e50a9] text-[13px] text-white">+7</div>
        <div className="flex gap-[42px]">
          {guests.map((g, i) => <div key={i} className={`flex h-[42px] w-[42px] items-center justify-center rounded-full ${g.c}`}>{g.t}</div>)}
        </div>
      </div>
      {speakers.map((s) => (
        <div key={s.name} className={`flex w-[180px] flex-col items-center pt-[25px] ${s.bg}`}>
          <div className={`flex h-11 w-11 shrink-0 items-center justify-center rounded-full text-[16px] font-medium ${s.c} ${s.ring}`}>{s.t}</div>
          <div className={`mt-[8px] flex h-[17px] w-full shrink-0 items-center pt-px pl-[15px] whitespace-nowrap text-[#f0f0f0] ${s.size}`}>
            {s.name}
            {s.muted && (
              <svg className="ml-[9px] shrink-0" width="14" height="14" viewBox="0 0 24 24"><rect x="8" y="1" width="8" height="14" rx="4" fill="#fff" /><path d="M5 11q0 7 7 7t7-7M12 18v5" fill="none" stroke="#fff" strokeWidth="1.800" /><path d="m2 2 20 21" stroke="#fff" strokeWidth="1.800" /></svg>
            )}
          </div>
        </div>
      ))}
    </div>
  );
}

export default function App() {
  return (
    <div className="flex h-[1080px] w-[1920px] flex-col overflow-hidden bg-black">
      <TopBar />
      <div className="flex min-h-0 grow">
        <Dock />
        <div className="flex w-[1848px] flex-col">
          <TeamsHeader />
          <div className="flex min-h-0 grow">
            <Rail />
            <div className="relative flex w-[1780px] flex-col bg-black">
              <div className={`ml-20 flex h-[911px] w-[1620px] shrink-0 flex-col rounded-b-[8px] bg-[#a9cbf8] ${inter}`}>
                <MacMenuBar />
                <TabStrip />
                <Toolbar />
                <SettingsPage />
              </div>
              <span className={`absolute top-[878px] left-8 text-[11.220px] leading-4 text-white [text-shadow:0_0_1px_rgba(0,0,0,.5),1px_1px_2px_rgba(0,0,0,.8)] ${noto}`}>ahmedabdelftah95165 (Guest)</span>
              <CallBar />
              <Participants />
            </div>
          </div>
        </div>
      </div>
    </div>
  );
}
